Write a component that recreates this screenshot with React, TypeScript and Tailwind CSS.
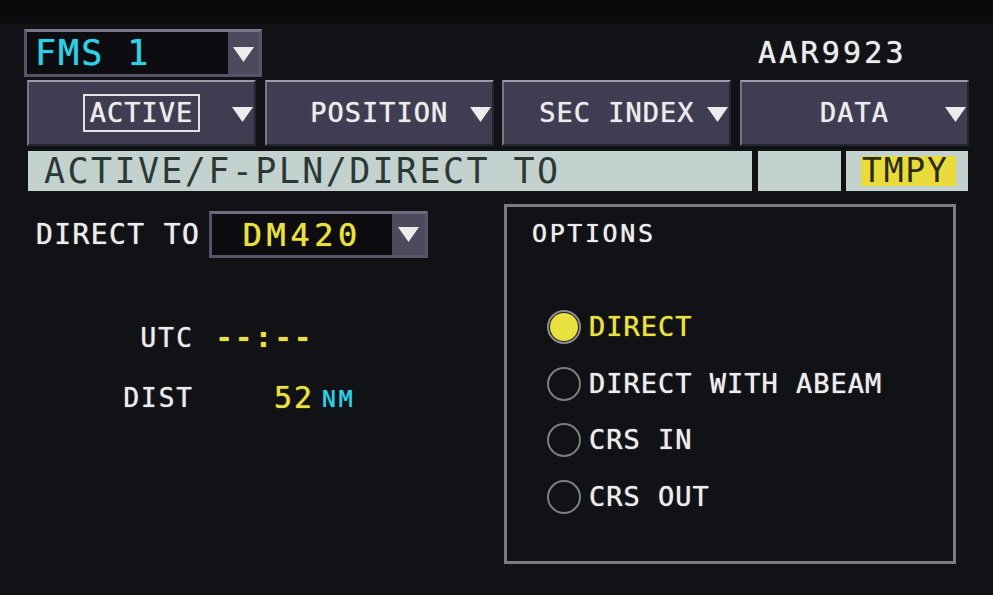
import React from 'react';

const mono = "font-['DejaVu_Sans_Mono','Liberation_Mono',monospace]";

function DownArrow({ w = 21, h = 15 }: { w?: number; h?: number }) {
  return (
    <svg width={w} height={h} viewBox="0 0 21 15">
      <polygon points="0,0 21,0 10.5,15" fill="#ececec" />
    </svg>
  );
}

function Tab({ label, boxed }: { label: string; boxed?: boolean }) {
  return (
    <div className="relative flex h-[66px] items-center justify-center border-2 border-t-[#9a9aa8] border-l-[#76768a] border-b-[#25252f] border-r-[#25252f] bg-[#3e3d51]">
      {boxed ? (
        <span className="border-2 border-[#e2e2e2] px-[5px] py-[2px] text-[27px] leading-[30px] tracking-[1px] text-[#ececec]">
          {label}
        </span>
      ) : (
        <span className="text-[27px] leading-[30px] tracking-[1px] text-[#ececec]">{label}</span>
      )}
      <span className="absolute right-[1px] top-[25px]">
        <DownArrow />
      </span>
    </div>
  );
}

function Radio({ label, selected }: { label: string; selected?: boolean }) {
  return (
    <div className="flex h-[40px] items-center gap-[8px]">
      {selected ? (
        <span className="flex h-[34px] w-[34px] items-center justify-center rounded-full border-2 border-[#8c8c8c] bg-[#1a1a1e]">
          <span className="h-[28px] w-[28px] rounded-full bg-[#e9e13e]" />
        </span>
      ) : (
        <span className="h-[34px] w-[34px] rounded-full border-2 border-[#7e7e80]" />
      )}
      <span
        className={`text-[27px] leading-[32px] tracking-[1px] ${selected ? 'text-[#e9e13e]' : 'text-[#ececec]'}`}
      >
        {label}
      </span>
    </div>
  );
}

export default function App() {
  return (
    <div className={`h-[595px] w-[993px] overflow-hidden bg-[#111216] ${mono} [text-shadow:0_0_1px_currentColor]`}>
      <div className="h-[24px] bg-gradient-to-b from-[#08080a] to-[#0d0d10]" />

      {/* header */}
      <div className="mt-[5px] flex h-[48px] items-center pl-[24px]">
        <div className="flex h-[48px] w-[238px] border-[3px] border-[#55556a] border-t-[#767688] bg-[#4b4b5d]">
          <div className="flex flex-1 items-center bg-[#0c0c11] pl-[8px]">
            <span className="text-[35px] leading-[40px] tracking-[2px] text-[#2fd0e4]">FMS 1</span>
          </div>
          <div className="flex w-[31px] items-center justify-center pt-[2px]">
            <DownArrow />
          </div>
        </div>
        <span className="ml-[496px] text-[30px] leading-[36px] tracking-[3.2px] text-[#ececec]">AAR9923</span>
      </div>

      {/* tabs */}
      <div className="mt-[3px] ml-[27px] grid w-[942px] grid-cols-4 gap-[8.67px]">
        <Tab label="ACTIVE" boxed />
        <Tab label="POSITION" />
        <Tab label="SEC INDEX" />
        <Tab label="DATA" />
      </div>

      {/* title bar */}
      <div className="mt-[5px] ml-[28px] flex h-[40px] gap-[6px] [text-shadow:none]">
        <div className="flex w-[724px] items-center bg-[#c3d2cf] pl-[16px]">
          <span className="text-[35px] leading-[40px] tracking-[2.4px] text-[#2c3835]">ACTIVE/F-PLN/DIRECT TO</span>
        </div>
        <div className="w-[83px] bg-[#c3d2cf]" />
        <div className="ml-[-1px] flex w-[122px] items-center bg-[#c3d2cf] pl-[15px]">
          <span className="flex h-[30px] w-[95px] items-center bg-[#e8db3a] pl-[1px] text-[33px] leading-[30px] tracking-[1.8px] text-[#2a2a18]">
            TMPY
          </span>
        </div>
      </div>

      {/* body */}
      <div className="mt-[13px] flex pl-[36px]">
        <div className="w-[468px]">
          <div className="mt-[7px] flex items-center gap-[9px]">
            <span className="text-[28px] leading-[32px] tracking-[1.4px] text-[#ececec]">DIRECT TO</span>
            <div className="flex h-[47px] w-[219px] border-[3px] border-[#55556a] border-t-[#6c6c7e] bg-[#4b4b5d]">
              <div className="flex flex-1 items-center justify-center bg-[#0c0c11]">
                <span className="text-[32px] leading-[36px] tracking-[4.6px] text-[#e9e13e]">DM420</span>
              </div>
              <div className="flex w-[33px] items-center justify-center">
                <DownArrow w={23} h={15} />
              </div>
            </div>
          </div>

          <div className="mt-[60px] grid grid-cols-[158px_120px_auto] items-center gap-y-[19px]">
            <span className="text-right text-[26px] leading-[40px] tracking-[2.2px] text-[#ececec]">UTC</span>
            <span className="text-right text-[28px] font-bold leading-[40px] tracking-[2.8px] text-[#e9e13e]">--:--</span>
            <span />
            <span className="text-right text-[26px] leading-[40px] tracking-[2px] text-[#ececec]">DIST</span>
            <span className="text-right text-[30px] leading-[40px] tracking-[2px] text-[#e9e13e]">52</span>
            <span className="pl-[8px] pt-[2px] text-[23px] leading-[40px] tracking-[3px] text-[#2fd0e4]">NM</span>
          </div>
        </div>

        <div className="h-[360px] w-[452px] border-[3px] border-[#7c7c7e] pt-[12px]">
          <div className="pl-[25px] text-[25px] leading-[30px] tracking-[2.6px] text-[#ececec]">OPTIONS</div>
          <div className="mt-[58px] flex flex-col gap-[16.7px] pl-[40px]">
            <Radio label="DIRECT" selected />
            <Radio label="DIRECT WITH ABEAM" />
            <Radio label="CRS IN" />
            <Radio label="CRS OUT" />
          </div>
        </div>
      </div>
    </div>
  );
}
